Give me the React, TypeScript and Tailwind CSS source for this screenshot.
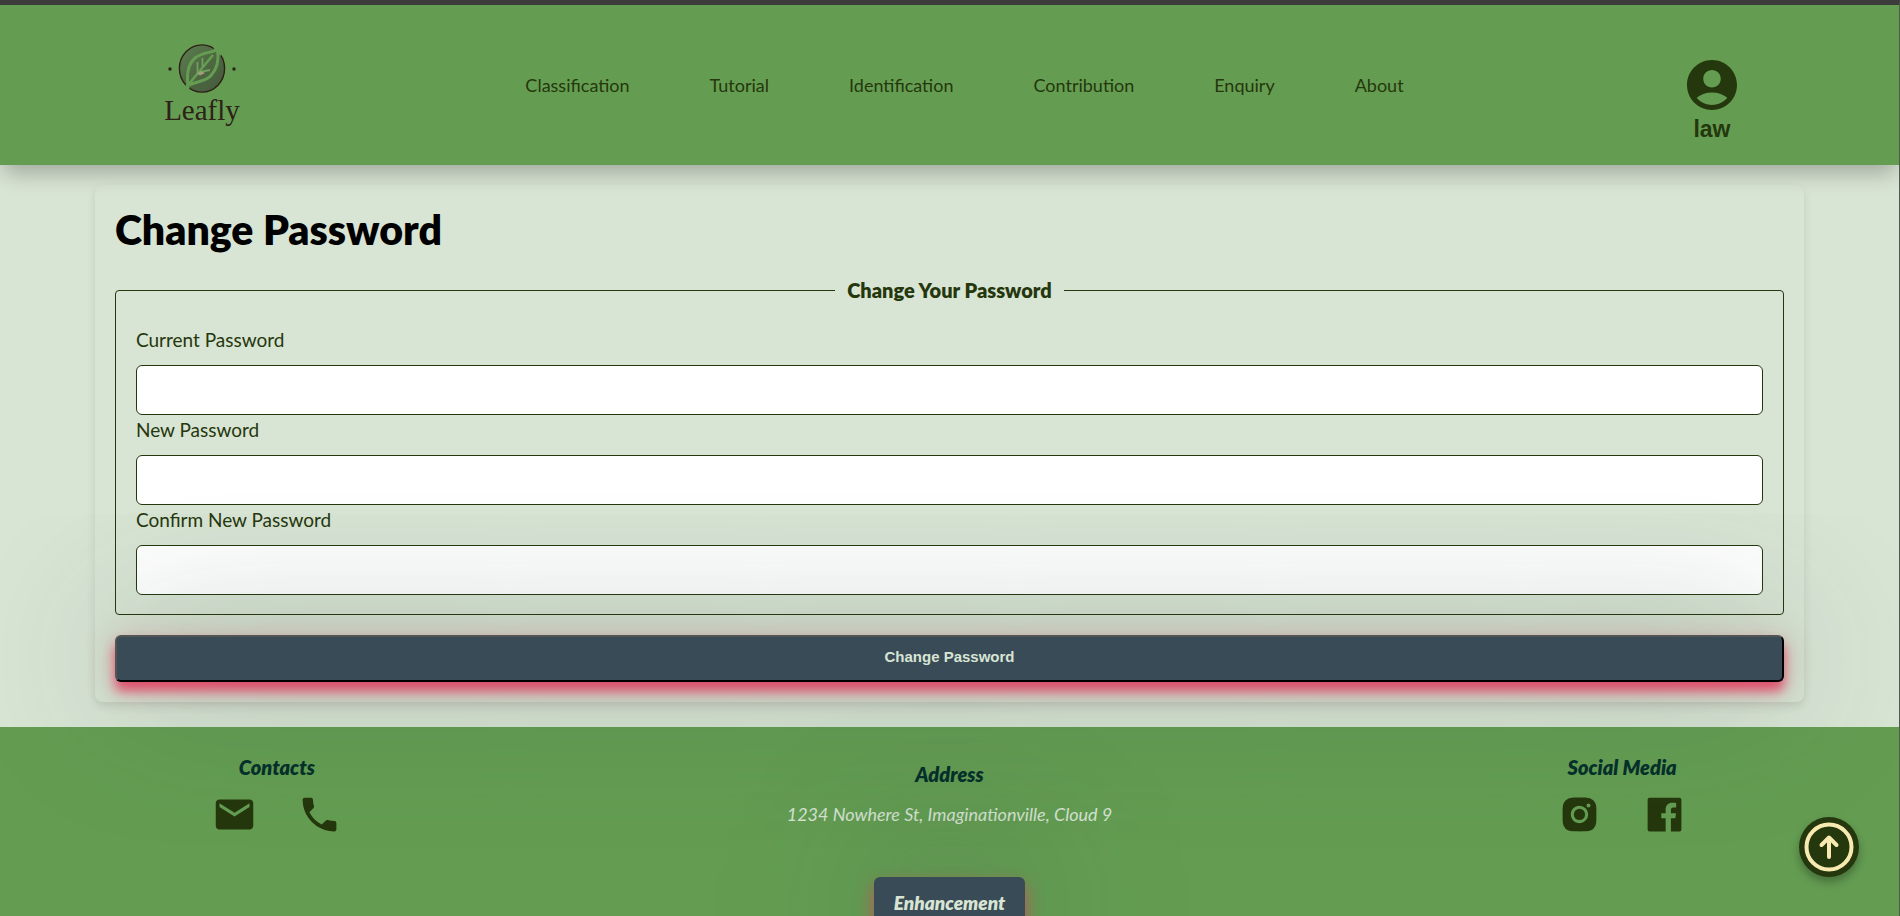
import { MdAccountCircle, MdEmail, MdPhone } from "react-icons/md";
import { BiLogoInstagramAlt, BiLogoFacebookSquare } from "react-icons/bi";

const navItems = ["Classification", "Tutorial", "Identification", "Contribution", "Enquiry", "About"];

const fields = [
  { id: "current-password", label: "Current Password" },
  { id: "new-password", label: "New Password" },
  { id: "confirm-password", label: "Confirm New Password" },
];

function Logo() {
  return (
    <a href="#" className="flex w-[90px] flex-col items-center">
      <svg viewBox="0 0 72 50" className="h-[50px] w-[72px]" fill="none">
        <defs>
          <linearGradient id="disc" x1="0" y1="0" x2="1" y2="1">
            <stop offset="0" stopColor="#5d7f50" />
            <stop offset="0.5" stopColor="#4e6842" />
            <stop offset="1" stopColor="#445a3a" />
          </linearGradient>
        </defs>
        <circle cx="4" cy="25" r="1.7" fill="#2e2118" />
        <circle cx="68" cy="25" r="1.7" fill="#2e2118" />
        <ellipse cx="36" cy="24.5" rx="22.6" ry="23.6" fill="url(#disc)" stroke="#2e2118" strokeWidth="1.4" />
        <path d="M46 1 L57 0 L55 12 L50 8 Z M20 40 L24 44 L18 48 Z" fill="#649d52" />
        <path d="M51.5 5.5 C53 15 51 25 45 31.5 C38.5 38.5 30 37 22 41.5 C20.5 30 22 20 29 14 C36 8 44 9.500 51.500 5.500 Z" stroke="#649d52" strokeWidth="3" />
        <path d="M22 41 L47 11" stroke="#649d52" strokeWidth="2.6" />
        <path d="M31.500 29 V18 M36.500 23 V14 M34 28 L44 26" stroke="#6fa05c" strokeWidth="1.800" />
        <path d="M31 29.500 l4 -2.500 l4 2 l-5 2.500 Z" fill="#a09f7c" />
      </svg>
      <span className="font-['Liberation_Serif',serif] text-[29px] leading-8 text-[#2e2118]">Leafly</span>
    </a>
  );
}

function Header() {
  return (
    <header className="relative z-10 flex h-40 shrink-0 items-center justify-between bg-[#649d52] px-[157px] shadow-[0_12px_20px_-4px_rgba(0,0,0,0.26)]">
      <Logo />
      <nav className="flex items-center gap-20 text-lg text-[#25370c]">
        {navItems.map((item) => (
          <a key={item} href="#">
            {item}
          </a>
        ))}
      </nav>
      <a href="#" className="mt-7 flex flex-col items-center text-[#25370c]">
        <MdAccountCircle className="size-[60px]" />
        <span className="font-['Liberation_Sans',sans-serif] text-[23px] leading-7 font-bold">law</span>
      </a>
    </header>
  );
}

function PasswordForm() {
  return (
    <form className="mx-[5%] mt-5 mb-[25px] rounded-lg p-5 shadow-[0_4px_10px_rgba(0,0,0,0.1)]">
      <h1 className="text-[41px] leading-[50px] font-extrabold text-black">Change Password</h1>
      <fieldset className="mt-[23px] rounded border border-[#25370c] px-5 pb-[19px] text-[#25370c]">
        <legend className="mx-auto px-3 text-xl leading-6 font-extrabold">Change Your Password</legend>
        <div className="pt-[23px]">
          {fields.map((field) => (
            <div key={field.id}>
              <label htmlFor={field.id} className="mb-2.5 block text-[19px] leading-[30px]">
                {field.label}
              </label>
              <input
                id={field.id}
                type="password"
                className="block h-[50px] w-full rounded-md border border-[#25370c] bg-white px-2.5 outline-none"
              />
            </div>
          ))}
        </div>
      </fieldset>
      <button
        type="submit"
        className="relative mt-5 block h-[47px] w-full rounded-md border-2 border-black bg-[#384b57] pb-0.5 font-['Liberation_Sans',sans-serif] text-[15px] font-bold text-[#d8e4d4] shadow-[0_9px_12px_rgba(225,60,95,0.85),0_4px_30px_rgba(200,80,90,0.3),0_0_150px_rgba(56,85,75,0.45)] [border-style:outset]"
      >
        Change Password
      </button>
    </form>
  );
}

function Footer() {
  return (
    <footer className="grow bg-[#649d52] px-[11%] pt-6 text-[#25370c] italic">
      <div className="flex items-start justify-between">
        <section className="flex w-[136px] flex-col items-center">
          <h2 className="text-xl leading-8 font-extrabold text-[#042f2a]">Contacts</h2>
          <div className="mt-[9px] flex gap-10">
            <a href="#" aria-label="Email">
              <MdEmail className="size-[45px]" />
            </a>
            <a href="#" aria-label="Phone">
              <MdPhone className="size-[45px]" />
            </a>
          </div>
        </section>
        <section className="flex flex-col items-center pt-[7px]">
          <h2 className="text-xl leading-8 font-extrabold text-[#042f2a]">Address</h2>
          <p className="mt-2 text-lg leading-8 text-[#d8e4d4]">1234 Nowhere St, Imaginationville, Cloud 9</p>
          <a
            href="#"
            className="mt-[47px] rounded-md bg-[#384b57] px-5 py-2.5 text-[19px] leading-8 font-extrabold text-[#d8e4d4] shadow-[0_8px_16px_rgba(225,60,95,0.75),0_0_150px_rgba(56,85,75,0.5)]"
          >
            Enhancement
          </a>
        </section>
        <section className="flex w-[136px] flex-col items-center">
          <h2 className="text-xl leading-8 font-extrabold whitespace-nowrap text-[#042f2a]">Social Media</h2>
          <div className="mt-[9px] flex gap-10">
            <a href="#" aria-label="Instagram">
              <BiLogoInstagramAlt className="size-[45px]" />
            </a>
            <a href="#" aria-label="Facebook">
              <BiLogoFacebookSquare className="size-[45px]" />
            </a>
          </div>
        </section>
      </div>
    </footer>
  );
}

export default function App() {
  return (
    <div className="flex h-screen flex-col overflow-y-auto border-t-[5px] border-r border-t-[#3c3c3c] border-r-[#4f5a50] bg-[#d8e4d4] font-[Lato,sans-serif] [scrollbar-width:none]">
      <Header />
      <main className="shrink-0">
        <PasswordForm />
      </main>
      <Footer />
      <button
        type="button"
        aria-label="Back to top"
        className="fixed right-[41px] bottom-[39px] z-20 rounded-full bg-[#25370c] shadow-[0_5px_10px_rgba(0,0,0,0.3)]"
      >
        <svg viewBox="0 0 60 60" className="size-[60px]" fill="none" stroke="#f7e9b0" strokeWidth="4" strokeLinecap="round" strokeLinejoin="round">
          <circle cx="30" cy="30" r="22.5" />
          <path d="M30 40 V21 M22.5 28 L30 20.5 L37.5 28" />
        </svg>
      </button>
    </div>
  );
}
